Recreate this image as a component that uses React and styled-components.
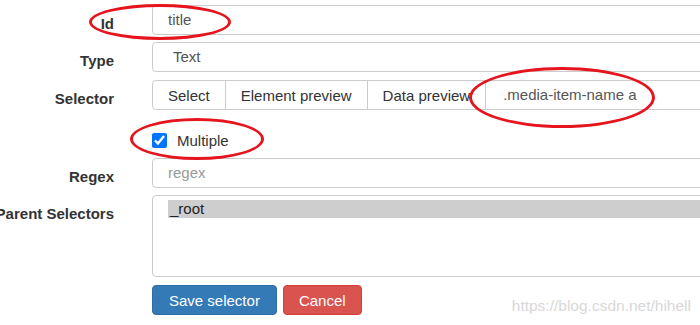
import React from "react";
import styled, { createGlobalStyle } from "styled-components";

const GlobalStyle = createGlobalStyle`
  html, body {
    margin: 0;
    padding: 0;
    background: #fff;
    overflow: hidden;
  }
  body {
    font-family: "Liberation Sans", Arial, sans-serif;
    font-size: 15px;
    color: #333;
  }
`;

const Page = styled.div`
  position: relative;
  width: 700px;
  height: 325px;
  overflow: hidden;
`;

const Form = styled.form`
  display: flex;
  flex-direction: column;
  gap: 7px;
  width: 900px;
  padding-top: 5px;
`;

const Row = styled.div`
  display: grid;
  grid-template-columns: 114px 1fr;
  column-gap: 38px;
  margin-top: ${(p) => p.$nudge || 0}px;
`;

// labels overflow to the left when they are wider than the column
const Label = styled.label`
  display: flex;
  justify-content: flex-end;
  white-space: nowrap;
  font-weight: bold;
  line-height: 20px;
  padding-top: 9px;
  color: #333;
`;

const Input = styled.div`
  box-sizing: border-box;
  height: ${(p) => p.$height || 30}px;
  border: 1px solid #ccc;
  border-radius: ${(p) => p.$radius || "4px"};
  padding: 0 15px 0 ${(p) => p.$indent || 15}px;
  display: flex;
  align-items: center;
  color: ${(p) => (p.$placeholder ? "#999" : "#555")};
  line-height: 20px;
  min-width: 0;
`;

const Group = styled.div`
  display: flex;
  height: 30px;
`;

const GroupButton = styled.button`
  box-sizing: border-box;
  height: 30px;
  padding: 0 15px;
  margin: 0 0 0 -1px;
  border: 1px solid #ccc;
  background: #fff;
  color: #333;
  font: inherit;
  white-space: nowrap;
  &:first-child {
    margin-left: 0;
    border-radius: 4px 0 0 4px;
  }
`;

const GroupInput = styled(Input)`
  flex: 1;
  margin-left: -1px;
  padding-left: 17px;
`;

const CheckRow = styled.div`
  display: flex;
  align-items: flex-start;
  gap: 10px;
  height: 34px;
  padding-top: 16px;
  box-sizing: border-box;
`;

const Check = styled.input`
  width: 15px;
  height: 15px;
  margin: 0;
  accent-color: #0075ff;
`;

const CheckText = styled.span`
  line-height: 15px;
  color: #333;
`;

const MultiSelect = styled.div`
  box-sizing: border-box;
  height: 82px;
  border: 1px solid #ccc;
  border-radius: 4px;
  padding: 4px 0 0 15px;
`;

const Option = styled.div`
  height: 18px;
  line-height: 18px;
  background: #cecece;
  padding-left: 2px;
  color: #222;
`;

const Actions = styled.div`
  display: flex;
  gap: 6px;
  margin-top: 1px;
`;

const Button = styled.button`
  box-sizing: border-box;
  height: 30px;
  padding: 0 ${(p) => (p.$danger ? 15 : 16)}px;
  border: 1px solid ${(p) => (p.$danger ? "#d43f3a" : "#2e6da4")};
  border-radius: 4px;
  background: ${(p) => (p.$danger ? "#d9534f" : "#337ab7")};
  color: #fff;
  font: inherit;
  white-space: nowrap;
`;

const Ring = styled.div`
  position: absolute;
  box-sizing: border-box;
  border: 3px solid #e5141d;
  border-radius: 50%;
  pointer-events: none;
`;

const Watermark = styled.div`
  position: absolute;
  right: 9px;
  top: 297px;
  font-size: 15.5px;
  color: #d8d8d8;
  white-space: nowrap;
`;

export default function App() {
  return (
    <Page>
      <GlobalStyle />
      <Form>
        <Row>
          <Label>Id</Label>
          <Input>title</Input>
        </Row>
        <Row>
          <Label>Type</Label>
          <Input $indent={20}>Text</Input>
        </Row>
        <Row $nudge={1}>
          <Label>Selector</Label>
          <Group>
            <GroupButton type="button">Select</GroupButton>
            <GroupButton type="button">Element preview</GroupButton>
            <GroupButton type="button">Data preview</GroupButton>
            <GroupInput $radius="0 4px 4px 0">.media-item-name a</GroupInput>
          </Group>
        </Row>
        <Row>
          <span />
          <CheckRow>
            <Check type="checkbox" checked readOnly />
            <CheckText>Multiple</CheckText>
          </CheckRow>
        </Row>
        <Row>
          <Label>Regex</Label>
          <Input $placeholder>regex</Input>
        </Row>
        <Row>
          <Label>Parent Selectors</Label>
          <MultiSelect>
            <Option>_root</Option>
          </MultiSelect>
        </Row>
        <Row>
          <span />
          <Actions>
            <Button type="button">Save selector</Button>
            <Button type="button" $danger>Cancel</Button>
          </Actions>
        </Row>
      </Form>

      <Ring style={{ left: 89, top: 4, width: 142, height: 36 }} />
      <Ring style={{ left: 469, top: 67, width: 186, height: 61 }} />
      <Ring style={{ left: 130, top: 118, width: 134, height: 42 }} />
      <Watermark>https://blog.csdn.net/hihell</Watermark>
    </Page>
  );
}
